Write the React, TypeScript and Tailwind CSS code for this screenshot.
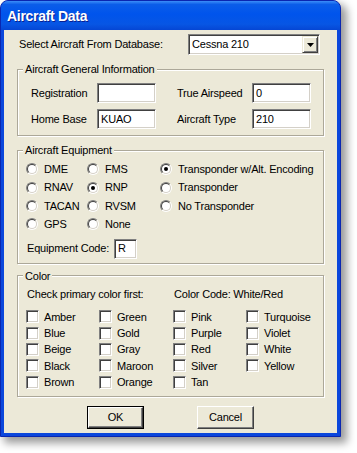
import type { ReactNode } from "react";

const sunken =
  "bg-white border border-t-[#808080] border-l-[#808080] border-b-white border-r-white shadow-[inset_1px_1px_0_#404040,inset_-1px_-1px_0_#d4d0c8]";

function TextBox({ value, className }: { value: string; className: string }) {
  return (
    <div className={`${sunken} ${className} h-[20px] flex items-center pl-[3px]`}>
      {value}
    </div>
  );
}

function Radio({ label, checked }: { label?: string; checked?: boolean }) {
  if (!label) return <div />;
  return (
    <div className="flex items-center">
      <span className="w-[12px] h-[12px] shrink-0 rounded-full border border-t-[#808080] border-l-[#808080] border-b-white border-r-white">
        <span className="flex w-full h-full items-center justify-center rounded-full bg-white border border-t-[#404040] border-l-[#404040] border-b-[#d4d0c8] border-r-[#d4d0c8]">
          {checked && <span className="w-[4px] h-[4px] rounded-full bg-black" />}
        </span>
      </span>
      <span className="ml-[6px] whitespace-nowrap">{label}</span>
    </div>
  );
}

function Check({ label }: { label: string }) {
  return (
    <div className="flex items-center">
      <span className={`${sunken} w-[13px] h-[13px] shrink-0`} />
      <span className="ml-[5px]">{label}</span>
    </div>
  );
}

function Group({ title, className, children }: { title: string; className?: string; children: ReactNode }) {
  return (
    <fieldset
      className={`border border-[#aca899] shadow-[inset_1px_1px_0_white,1px_1px_0_white] px-0 ${className ?? ""}`}
    >
      <legend className="ml-[5px] px-[2px] leading-[12px] bg-[#ece9d8]">{title}</legend>
      {children}
    </fieldset>
  );
}

function Button({ label, isDefault }: { label: string; isDefault?: boolean }) {
  return (
    <div className={`w-[57px] h-[23px] ${isDefault ? "border border-black" : ""}`}>
      <div className="w-full h-full flex items-center justify-center bg-[#ece9d8] border border-t-white border-l-white border-b-[#404040] border-r-[#404040] shadow-[inset_-1px_-1px_0_#808080]">
        {label}
      </div>
    </div>
  );
}

export default function App() {
  const equipment = [
    ["DME", false],
    ["FMS", false],
    ["Transponder w/Alt. Encoding", true],
    ["RNAV", false],
    ["RNP", true],
    ["Transponder", false],
    ["TACAN", false],
    ["RVSM", false],
    ["No Transponder", false],
    ["GPS", false],
    ["None", false],
    ["", false],
  ] as const;

  const colors = [
    "Amber", "Blue", "Beige", "Black", "Brown",
    "Green", "Gold", "Gray", "Maroon", "Orange",
    "Pink", "Purple", "Red", "Silver", "Tan",
    "Turquoise", "Violet", "White", "Yellow",
  ];

  return (
    <div className="w-[357px] h-[453px] bg-white font-['Liberation_Sans',Arial,sans-serif] text-[11px] tracking-[-0.2px] text-black">
      <div className="w-[341px] h-[437px] flex flex-col rounded-t-[8px] border border-[#0a26b0] bg-[#0b47dc] shadow-[5px_5px_9px_1px_rgba(0,0,0,0.4)]">
        {/* title bar */}
        <div className="h-[29px] shrink-0 flex items-center pl-[6px] pt-[2px] rounded-t-[7px] bg-[linear-gradient(to_bottom,#3c8ef8_0%,#0b5de9_12%,#0054ec_45%,#0756e4_80%,#0546d4_100%)]">
          <span className="text-white font-bold text-[14px] tracking-[-0.3px] [text-shadow:1px_1px_0_#0a1f8f]">
            Aircraft Data
          </span>
        </div>

        {/* client area */}
        <div className="flex-1 mx-[3px] mb-[3px] bg-[#ece9d8] px-[13px] pt-[4px]">
          <div className="flex items-center h-[21px] pr-[4px]">
            <span className="ml-[2px]">Select Aircraft From Database:</span>
            <div className={`${sunken} ml-auto w-[132px] h-[21px] flex items-center pl-[3px] pr-[1px]`}>
              <span className="flex-1">Cessna 210</span>
              <span className="w-[16px] h-[17px] flex items-center justify-center bg-[#ece9d8] border border-t-[#ece9d8] border-l-[#ece9d8] border-b-[#404040] border-r-[#404040] shadow-[inset_1px_1px_0_white,inset_-1px_-1px_0_#808080]">
                <svg width="7" height="4" viewBox="0 0 7 4">
                  <path d="M0 0h7L3.5 4z" fill="black" />
                </svg>
              </span>
            </div>
          </div>

          <Group title="Aircraft General Information" className="mt-[8px]">
            <div className="flex flex-col gap-[6px] pt-[8px] pb-[6px] pl-[13px]">
              <div className="flex items-center">
                <span className="w-[66px]">Registration</span>
                <TextBox value="" className="w-[59px]" />
                <span className="ml-[21px] w-[75px]">True Airspeed</span>
                <TextBox value="0" className="w-[59px]" />
              </div>
              <div className="flex items-center">
                <span className="w-[66px]">Home Base</span>
                <TextBox value="KUAO" className="w-[59px]" />
                <span className="ml-[21px] w-[75px]">Aircraft Type</span>
                <TextBox value="210" className="w-[59px]" />
              </div>
            </div>
          </Group>

          <Group title="Aircraft Equipment" className="mt-[8px]">
            <div className="pt-[4px] pb-[4px] pl-[8px]">
              <div className="grid grid-cols-[61px_73px_1fr] auto-rows-[18.4px] items-center">
                {equipment.map(([label, checked], i) => (
                  <Radio key={i} label={label} checked={checked} />
                ))}
              </div>
              <div className="flex items-center mt-[5px] pl-[1px]">
                <span className="w-[87px]">Equipment Code:</span>
                <TextBox value="R" className="w-[23px]" />
              </div>
            </div>
          </Group>

          <Group title="Color" className="mt-[6px]">
            <div className="pt-[6px] pb-[5px] pl-[8px]">
              <div className="flex items-center h-[14px] pl-[1px]">
                <span className="w-[147px]">Check primary color first:</span>
                <span>Color Code: White/Red</span>
              </div>
              <div className="mt-[7px] grid grid-flow-col grid-rows-[repeat(5,16.4px)] grid-cols-[73px_74px_73px_1fr] items-center">
                {colors.map((c) => (
                  <Check key={c} label={c} />
                ))}
              </div>
            </div>
          </Group>

          <div className="flex justify-center gap-[53px] mt-[9px]">
            <Button label="OK" isDefault />
            <Button label="Cancel" />
          </div>
        </div>
      </div>
    </div>
  );
}
